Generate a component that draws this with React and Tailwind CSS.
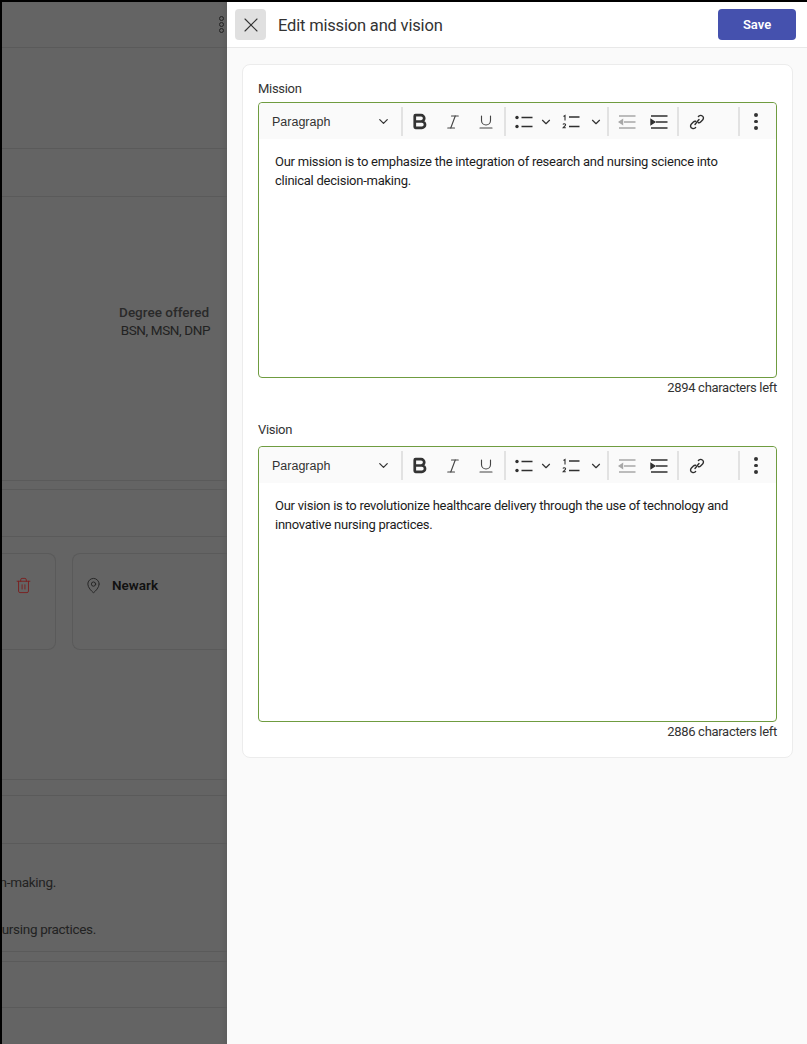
import React from 'react';
import { X, ChevronDown, Bold, Italic, Underline, Trash2, MapPin } from 'lucide-react';

const Divider = () => <div className="my-1 h-[29px] w-[2px] shrink-0 bg-[#e2e2e2]" />;

const BulletIcon = () => (
  <svg width="18" height="14" viewBox="0 0 18 14" fill="none" stroke="#2f2f2f" strokeWidth="1.6">
    <circle cx="2" cy="2.5" r="1.7" fill="#2f2f2f" stroke="none" />
    <circle cx="2" cy="11.5" r="1.7" fill="#2f2f2f" stroke="none" />
    <path d="M6.5 2.5H17.5M6.5 11.5H17.5" />
  </svg>
);

const NumberIcon = () => (
  <svg width="18" height="16" viewBox="0 0 18 16" fill="none" stroke="#2f2f2f">
    <path d="M1.5 2.5 3 1.5V6.5" strokeWidth="1.1" />
    <path d="M1 10.5c.3-1 2.6-1 2.6.3 0 1-1.6 1.6-2.5 3h2.7" strokeWidth="1.1" />
    <path d="M7 3H17.5M7 12.5H17.5" strokeWidth="1.6" />
  </svg>
);

const IndentIcon = ({ out }) => (
  <svg width="18" height="14" viewBox="0 0 18 14" fill="none" stroke={out ? '#a8a8a8' : '#2f2f2f'} strokeWidth="1.4">
    <path d="M1 1H17.5M6 7H17.5M1 13H17.5" />
    {out ? <path d="M4.5 4.8 1.2 7 4.5 9.2Z" fill="#a8a8a8" /> : <path d="M1 4.5 4.8 7 1 9.5Z" fill="#2f2f2f" />}
  </svg>
);

const LinkIcon = () => (
  <svg width="16" height="16" viewBox="0 0 16 16" fill="none" stroke="#2f2f2f" strokeWidth="1.4" strokeLinecap="round">
    <path d="M6.6 13.4 6 14c-1.600 1.300-4 .3-4.400-1.400-.2-1 .1-1.900.8-2.600l2-2c.6-.6 1.500-.9 2.300-.7" />
    <path d="M9.400 2.600 10 2c1.600-1.300 4-.3 4.400 1.400.2 1-.1 1.900-.8 2.600l-2 2c-.6.6-1.500.9-2.300.7" />
    <path d="M6 10.500 10 5.500" />
  </svg>
);

const Editor = ({ text, left }) => (
  <>
    <div className="h-[276px] rounded-[4px] border border-[#6f9c40] bg-white">
      <div className="flex h-[36px] items-center rounded-t-[4px] bg-[#fafafa] pt-[1px] font-['Liberation_Sans',sans-serif]">
        <div className="flex w-[142px] shrink-0 items-center justify-between pl-[13px] pr-[10px] text-[12.5px] text-[#333]">
          <span className="pt-[2px]">Paragraph</span>
          <ChevronDown size={15} color="#333" strokeWidth={2} />
        </div>
        <Divider />
        <div className="flex w-[33px] shrink-0 justify-center"><Bold size={19} color="#333" strokeWidth={3.4} /></div>
        <div className="flex w-[33px] shrink-0 justify-center"><Italic size={18} color="#444" strokeWidth={1.5} /></div>
        <div className="flex w-[33px] shrink-0 justify-center"><Underline size={18} color="#444" strokeWidth={1.5} /></div>
        <div className="w-[2px] shrink-0" />
        <Divider />
        <div className="ml-[9px] flex w-[18px] shrink-0 justify-center"><BulletIcon /></div>
        <div className="ml-[5px] flex w-[16px] shrink-0 justify-center"><ChevronDown size={14} color="#333" strokeWidth={2} /></div>
        <div className="ml-[8px] flex w-[18px] shrink-0 justify-center"><NumberIcon /></div>
        <div className="ml-[8px] flex w-[16px] shrink-0 justify-center"><ChevronDown size={14} color="#333" strokeWidth={2} /></div>
        <div className="w-[3px] shrink-0" />
        <Divider />
        <div className="ml-[8px] flex w-[20px] shrink-0 justify-center"><IndentIcon out /></div>
        <div className="ml-[12px] flex w-[20px] shrink-0 justify-center"><IndentIcon /></div>
        <div className="w-[8px] shrink-0" />
        <Divider />
        <div className="ml-[8px] flex w-[20px] shrink-0 justify-center"><LinkIcon /></div>
        <div className="w-[31px] shrink-0" />
        <Divider />
        <div className="ml-[6px] flex w-[20px] shrink-0 flex-col items-center gap-[3px]">
          <span className="size-[3.5px] rounded-full bg-[#333]" />
          <span className="size-[3.5px] rounded-full bg-[#333]" />
          <span className="size-[3.5px] rounded-full bg-[#333]" />
        </div>
      </div>
      <p className="pl-4 pr-[30px] pt-[13px] text-[13px] leading-[19px] tracking-[-0.25px] text-[#1c1c1c]">{text}</p>
    </div>
    <div className="mt-[1px] text-right text-[13px] leading-[18px] tracking-[-0.3px] text-[#333]">{left}</div>
  </>
);

const Background = () => (
  <div className="flex w-[225px] shrink-0 flex-col overflow-hidden bg-[#646464] text-[13.5px] text-[#222] shadow-[inset_-6px_0_6px_-4px_rgba(0,0,0,0.08)]">
    <div className="flex h-[46px] shrink-0 items-center justify-end border-b border-[#5a5a5a] pr-[3px]">
      <div className="flex flex-col gap-[1px]">
        <span className="size-[5px] rounded-full border border-[#222]" />
        <span className="size-[5px] rounded-full border border-[#222]" />
        <span className="size-[5px] rounded-full border border-[#222]" />
      </div>
    </div>
    <div className="h-[101px] shrink-0 border-b border-[#5a5a5a]" />
    <div className="h-[48px] shrink-0 border-b border-[#5a5a5a]" />
    <div className="flex h-[284px] shrink-0 flex-col items-end border-b border-[#5a5a5a] pr-[17px] pt-[106px] leading-[18px]">
      <div className="pr-[1px] font-medium text-[#2a2a2a]">Degree offered</div>
      <div className="tracking-[-0.4px]">BSN, MSN, DNP</div>
    </div>
    <div className="h-[9px] shrink-0 border-b border-[#5a5a5a]" />
    <div className="h-[47px] shrink-0 border-b border-[#5a5a5a]" />
    <div className="flex h-[243px] shrink-0 items-start border-b border-[#5a5a5a] pt-[16px]">
      <div className="flex h-[97px] w-[54px] shrink-0 items-center justify-end rounded-r-[8px] border border-l-0 border-[#5a5a5a] pr-[23px] pb-[32px]">
        <Trash2 size={17} color="#7a1f1f" strokeWidth={1.3} className="shrink-0" />
      </div>
      <div className="ml-[16px] flex h-[97px] flex-1 items-start rounded-l-[8px] border border-r-0 border-[#5a5a5a] pl-[12px] pt-[21px]">
        <div className="flex h-[20px] items-center gap-[10px]">
          <MapPin size={17} color="#222" strokeWidth={1.3} className="shrink-0" />
          <span className="font-semibold text-[#111]">Newark</span>
        </div>
      </div>
    </div>
    <div className="h-[16px] shrink-0 border-b border-[#5a5a5a]" />
    <div className="h-[48px] shrink-0 border-b border-[#5a5a5a]" />
    <div className="flex h-[108px] shrink-0 flex-col gap-[28px] border-b border-[#5a5a5a] pt-[29px] leading-[19px] tracking-[-0.3px]">
      <div className="flex justify-end whitespace-nowrap pr-[171px]">clinical decision-making.</div>
      <div className="flex justify-end whitespace-nowrap pr-[131px]">innovative nursing practices.</div>
    </div>
    <div className="h-[10px] shrink-0 border-b border-[#5a5a5a]" />
    <div className="h-[46px] shrink-0 border-b border-[#5a5a5a]" />
  </div>
);

export default function App() {
  return (
    <div className="flex h-[1044px] w-[807px] overflow-hidden bg-black pl-[2px] pt-[2px] font-['Roboto',sans-serif]">
      <Background />
      <div className="flex flex-1 flex-col bg-[#fafafa]">
        <header className="flex h-[46px] shrink-0 items-center justify-between border-b border-[#e8e8e8] bg-white pl-[8px] pr-[11px]">
          <div className="flex items-center gap-[12px]">
            <button className="flex size-[31px] items-center justify-center rounded-[4px] bg-[#e0e0e0]">
              <X size={24} color="#333" strokeWidth={1.1} />
            </button>
            <h1 className="pt-[3px] text-[16.5px] font-normal tracking-[-0.18px] text-[#333]">Edit mission and vision</h1>
          </div>
          <button className="h-[31px] w-[78px] rounded-[4px] bg-[#4551ae] text-[13px] font-semibold text-white">Save</button>
        </header>
        <main className="pl-[15px] pr-[14px] pt-[16px]">
          <section className="h-[694px] rounded-[8px] border border-[#ececec] bg-white px-[15px] pt-[14px]">
            <div className="mb-[3px] text-[13px] leading-[20px] tracking-[-0.3px] text-[#333]">Mission</div>
            <Editor
              text="Our mission is to emphasize the integration of research and nursing science into clinical decision-making."
              left="2894 characters left"
            />
            <div className="mb-[6px] mt-[23px] text-[13px] leading-[20px] tracking-[-0.3px] text-[#333]">Vision</div>
            <Editor
              text="Our vision is to revolutionize healthcare delivery through the use of technology and innovative nursing practices."
              left="2886 characters left"
            />
          </section>
        </main>
      </div>
    </div>
  );
}
